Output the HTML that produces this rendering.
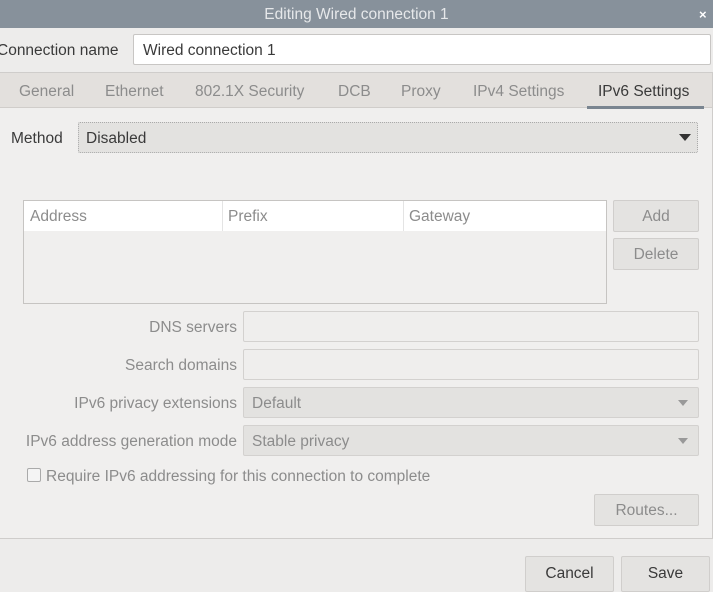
<!DOCTYPE html>
<html><head><style>
*{box-sizing:border-box;margin:0;padding:0}
body{width:713px;height:587px;overflow:hidden;background:#edeceb;font-family:"Liberation Sans",sans-serif;font-size:15.5px;letter-spacing:0;color:#3a3a3a;position:relative}
.a{position:absolute}
.t{position:absolute;white-space:nowrap;line-height:20px;margin-top:2px}
.g{color:#8c8c8c}
.field{position:absolute;background:#fff;border:1px solid #c8c6c4;border-radius:2px}
.dis{position:absolute;background:#efeeed;border:1px solid #d3d1cf;border-radius:2px}
.combo{position:absolute;background:#e3e2e0;border:1px solid #d3d1cf;border-radius:2px}
.btn{position:absolute;background:#e4e3e1;border:1px solid #d0cecc;border-radius:2px;text-align:center}
.arr{position:absolute;width:0;height:0;border-left:6px solid transparent;border-right:6px solid transparent;border-top:7px solid #333}
</style></head><body>
<div class="a" style="left:0;top:0;width:713px;height:28px;background:#87919b"></div>
<div class="t" style="left:0;width:713px;top:3px;text-align:center;color:#e6e8ea">Editing Wired connection 1</div>
<div class="t" style="left:699px;top:3px;color:#fff;font-weight:bold;font-size:13px">×</div>

<div class="t" style="left:-3px;top:39px">Connection name</div>
<div class="field" style="left:133px;top:34px;width:578px;height:31px"></div>
<div class="t" style="left:143px;top:39px">Wired connection 1</div>

<div class="a" style="left:0;top:72px;width:713px;height:467px;background:#f0efee;border:1px solid #cfcdcb;border-left:none"></div>
<div class="a" style="left:0;top:73px;width:712px;height:35px;background:#e3e0dd;border-bottom:1px solid #d0cdca"></div>
<div class="t g" style="left:19px;top:80px">General</div>
<div class="t g" style="left:105px;top:80px">Ethernet</div>
<div class="t g" style="left:195px;top:80px">802.1X Security</div>
<div class="t g" style="left:338px;top:80px">DCB</div>
<div class="t g" style="left:401px;top:80px">Proxy</div>
<div class="t g" style="left:473px;top:80px">IPv4 Settings</div>
<div class="t" style="left:598px;top:80px">IPv6 Settings</div>
<div class="a" style="left:587px;top:106px;width:117px;height:3px;background:#7a8590"></div>

<div class="t" style="left:11px;top:127px">Method</div>
<div class="combo" style="left:78px;top:122px;width:620px;height:31px;border:1px dotted #aaa"></div>
<div class="t" style="left:86px;top:127px">Disabled</div>
<div class="arr" style="left:679px;top:134px"></div>

<div class="a" style="left:23px;top:200px;width:584px;height:104px;border:1px solid #c6c4c2;background:#f0efee"></div>
<div class="a" style="left:24px;top:201px;width:582px;height:30px;background:#fff"></div>
<div class="a" style="left:222px;top:201px;width:1px;height:30px;background:#e4e4e4"></div>
<div class="a" style="left:403px;top:201px;width:1px;height:30px;background:#e4e4e4"></div>
<div class="t g" style="left:30px;top:205px">Address</div>
<div class="t g" style="left:228px;top:205px">Prefix</div>
<div class="t g" style="left:409px;top:205px">Gateway</div>
<div class="btn g" style="left:613px;top:200px;width:86px;height:32px;line-height:32px">Add</div>
<div class="btn g" style="left:613px;top:238px;width:86px;height:32px;line-height:32px">Delete</div>

<div class="t g" style="right:476px;top:316px">DNS servers</div>
<div class="dis" style="left:243px;top:311px;width:456px;height:31px"></div>
<div class="t g" style="right:476px;top:354px">Search domains</div>
<div class="dis" style="left:243px;top:349px;width:456px;height:31px"></div>
<div class="t g" style="right:476px;top:392px">IPv6 privacy extensions</div>
<div class="combo" style="left:243px;top:387px;width:456px;height:31px"></div>
<div class="t g" style="left:252px;top:392px">Default</div>
<div class="arr" style="left:678px;top:400px;border-top-color:#999;border-left-width:5px;border-right-width:5px;border-top-width:6px"></div>
<div class="t g" style="right:476px;top:430px">IPv6 address generation mode</div>
<div class="combo" style="left:243px;top:425px;width:456px;height:31px"></div>
<div class="t g" style="left:252px;top:430px">Stable privacy</div>
<div class="arr" style="left:678px;top:438px;border-top-color:#999;border-left-width:5px;border-right-width:5px;border-top-width:6px"></div>

<div class="a" style="left:27px;top:468px;width:14px;height:14px;border:1px solid #aaa;background:#f4f4f4;border-radius:2px"></div>
<div class="t g" style="left:46px;top:465px">Require IPv6 addressing for this connection to complete</div>
<div class="btn g" style="left:594px;top:494px;width:105px;height:32px;line-height:32px">Routes...</div>

<div class="btn" style="left:525px;top:556px;width:89px;height:36px;line-height:34px">Cancel</div>
<div class="btn" style="left:621px;top:556px;width:89px;height:36px;line-height:34px">Save</div>
</body></html>
